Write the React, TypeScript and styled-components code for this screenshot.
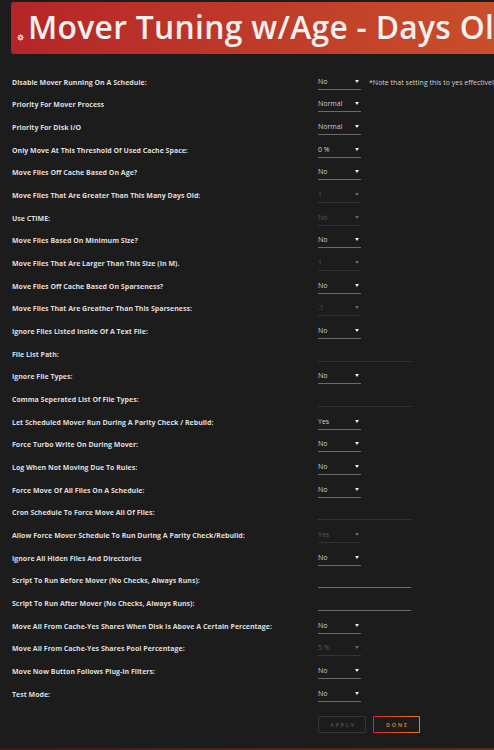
import React from "react";
import styled, { createGlobalStyle, css } from "styled-components";

const GlobalStyle = createGlobalStyle`
  html, body {
    margin: 0;
    padding: 0;
    background: #1c1c1c;
    overflow: hidden;
  }
  body {
    font-family: "Open Sans", "Liberation Sans", sans-serif;
    color: #d4d4d4;
  }
`;

const Page = styled.div`
  width: 494px;
  height: 750px;
  overflow: hidden;
  display: flex;
  flex-direction: column;
`;

const TitleBar = styled.div`
  margin: 2px 0 0 11px;
  height: 52px;
  border-radius: 3px 0 0 3px;
  background: linear-gradient(90deg, #b52528 0%, #bf3a2a 50%, #c94e2a 100%);
  display: flex;
  align-items: flex-end;
  padding: 0 0 11px 6px;
  box-sizing: border-box;
  white-space: nowrap;
  overflow: hidden;
`;

const GearIcon = styled.svg`
  width: 7px;
  height: 7px;
  margin: 0 4px 2px 0;
  flex-shrink: 0;
`;

const Title = styled.h1`
  margin: 0;
  font-size: 31.8px;
  line-height: 32px;
  font-weight: 600;
  color: #f4f0ee;
  letter-spacing: 0.3px;
`;

const Form = styled.div`
  padding: 17px 0 0 12px;
  display: flex;
  flex-direction: column;
`;

const Row = styled.div`
  display: grid;
  grid-template-columns: 306px auto;
  align-items: center;
  height: 22.67px;
  white-space: nowrap;
`;

const Label = styled.div`
  font-size: 7px;
  font-weight: 700;
  color: #dcdcdc;
`;

const Control = styled.div`
  display: flex;
  align-items: center;
  gap: 8px;
  overflow: hidden;
`;

const fieldLine = (disabled?: boolean) => css`
  border-bottom: 1.5px solid ${disabled ? "#333" : "#6a6a6a"};
`;

const Select = styled.div<{ $disabled?: boolean }>`
  width: 43px;
  height: 15px;
  flex-shrink: 0;
  box-sizing: border-box;
  ${(p) => fieldLine(p.$disabled)};
  display: flex;
  align-items: center;
  justify-content: space-between;
  padding-bottom: 1px;
  font-size: 7px;
  color: ${(p) => (p.$disabled ? "#565656" : "#cfcfcf")};
`;

const Arrow = styled.span<{ $disabled?: boolean }>`
  width: 0;
  height: 0;
  margin-right: 2px;
  border-left: 2px solid transparent;
  border-right: 2px solid transparent;
  border-top: 3px solid ${(p) => (p.$disabled ? "#666" : "#eee")};
`;

const TextField = styled.div<{ $disabled?: boolean }>`
  width: 93px;
  height: 15px;
  box-sizing: border-box;
  ${(p) => fieldLine(p.$disabled)};
`;

const Note = styled.span`
  font-size: 7px;
  color: #cfcfcf;
`;

const Buttons = styled.div`
  display: flex;
  gap: 7px;
  margin: 11px 0 0 306px;
`;

const Button = styled.button<{ $primary?: boolean }>`
  height: 17px;
  width: ${(p) => (p.$primary ? "47px" : "48px")};
  padding: 0;
  background: transparent;
  font-family: "Open Sans", "Liberation Sans", sans-serif;
  font-size: 5.5px;
  font-weight: 700;
  letter-spacing: 1.6px;
  text-indent: 1.6px;
  border-radius: 1px;
  ${(p) =>
    p.$primary
      ? css`
          color: #df6b22;
          border: 1.5px solid transparent;
          background:
            linear-gradient(#1c1c1c, #1c1c1c) padding-box,
            linear-gradient(90deg, #d42a2a, #e8801f) border-box;
        `
      : css`
          color: #4a4a4a;
          border: 1.5px solid #353535;
        `}
`;

const BottomEdge = styled.div`
  margin-top: auto;
  height: 2px;
  background: linear-gradient(90deg, #3a1c18, #5a2a1c);
`;

type Field =
  | { kind: "select"; value: string; disabled?: boolean; note?: string }
  | { kind: "text"; disabled?: boolean };

const rows: [string, Field][] = [
  ["Disable Mover Running On A Schedule:", { kind: "select", value: "No", note: "*Note that setting this to yes effectively" }],
  ["Priority For Mover Process", { kind: "select", value: "Normal" }],
  ["Priority For Disk I/O", { kind: "select", value: "Normal" }],
  ["Only Move At This Threshold Of Used Cache Space:", { kind: "select", value: "0 %" }],
  ["Move Files Off Cache Based On Age?", { kind: "select", value: "No" }],
  ["Move Files That Are Greater Than This Many Days Old:", { kind: "select", value: "1", disabled: true }],
  ["Use CTIME:", { kind: "select", value: "No", disabled: true }],
  ["Move Files Based On Minimum Size?", { kind: "select", value: "No" }],
  ["Move Files That Are Larger Than This Size (In M).", { kind: "select", value: "1", disabled: true }],
  ["Move Files Off Cache Based On Sparseness?", { kind: "select", value: "No" }],
  ["Move Files That Are Greather Than This Sparseness:", { kind: "select", value: ".1", disabled: true }],
  ["Ignore Files Listed Inside Of A Text File:", { kind: "select", value: "No" }],
  ["File List Path:", { kind: "text", disabled: true }],
  ["Ignore File Types:", { kind: "select", value: "No" }],
  ["Comma Seperated List Of File Types:", { kind: "text", disabled: true }],
  ["Let Scheduled Mover Run During A Parity Check / Rebuild:", { kind: "select", value: "Yes" }],
  ["Force Turbo Write On During Mover:", { kind: "select", value: "No" }],
  ["Log When Not Moving Due To Rules:", { kind: "select", value: "No" }],
  ["Force Move Of All Files On A Schedule:", { kind: "select", value: "No" }],
  ["Cron Schedule To Force Move All Of Files:", { kind: "text", disabled: true }],
  ["Allow Force Mover Schedule To Run During A Parity Check/Rebuild:", { kind: "select", value: "Yes", disabled: true }],
  ["Ignore All Hiden Files And Directories", { kind: "select", value: "No" }],
  ["Script To Run Before Mover (No Checks, Always Runs):", { kind: "text" }],
  ["Script To Run After Mover (No Checks, Always Runs):", { kind: "text" }],
  ["Move All From Cache-Yes Shares When Disk Is Above A Certain Percentage:", { kind: "select", value: "No" }],
  ["Move All From Cache-Yes Shares Pool Percentage:", { kind: "select", value: "5 %", disabled: true }],
  ["Move Now Button Follows Plug-In Filters:", { kind: "select", value: "No" }],
  ["Test Mode:", { kind: "select", value: "No" }],
];

const Gear = () => (
  <GearIcon viewBox="0 0 10 10">
    <g fill="#f4f0ee">
      {[0, 45, 90, 135].map((a) => (
        <rect key={a} x="4.2" y="0.6" width="1.6" height="8.8" transform={`rotate(${a} 5 5)`} />
      ))}
    </g>
    <circle cx="5" cy="5" r="3.2" fill="#f4f0ee" />
    <circle cx="5" cy="5" r="1.5" fill="#b72729" />
  </GearIcon>
);

export default function App() {
  return (
    <Page>
      <GlobalStyle />
      <TitleBar>
        <Gear />
        <Title>Mover Tuning w/Age - Days Old</Title>
      </TitleBar>
      <Form>
        {rows.map(([label, field]) => (
          <Row key={label}>
            <Label>{label}</Label>
            <Control>
              {field.kind === "select" ? (
                <>
                  <Select $disabled={field.disabled}>
                    <span>{field.value}</span>
                    <Arrow $disabled={field.disabled} />
                  </Select>
                  {field.note && <Note>{field.note}</Note>}
                </>
              ) : (
                <TextField $disabled={field.disabled} />
              )}
            </Control>
          </Row>
        ))}
        <Buttons>
          <Button disabled>APPLY</Button>
          <Button $primary>DONE</Button>
        </Buttons>
      </Form>
      <BottomEdge />
    </Page>
  );
}
